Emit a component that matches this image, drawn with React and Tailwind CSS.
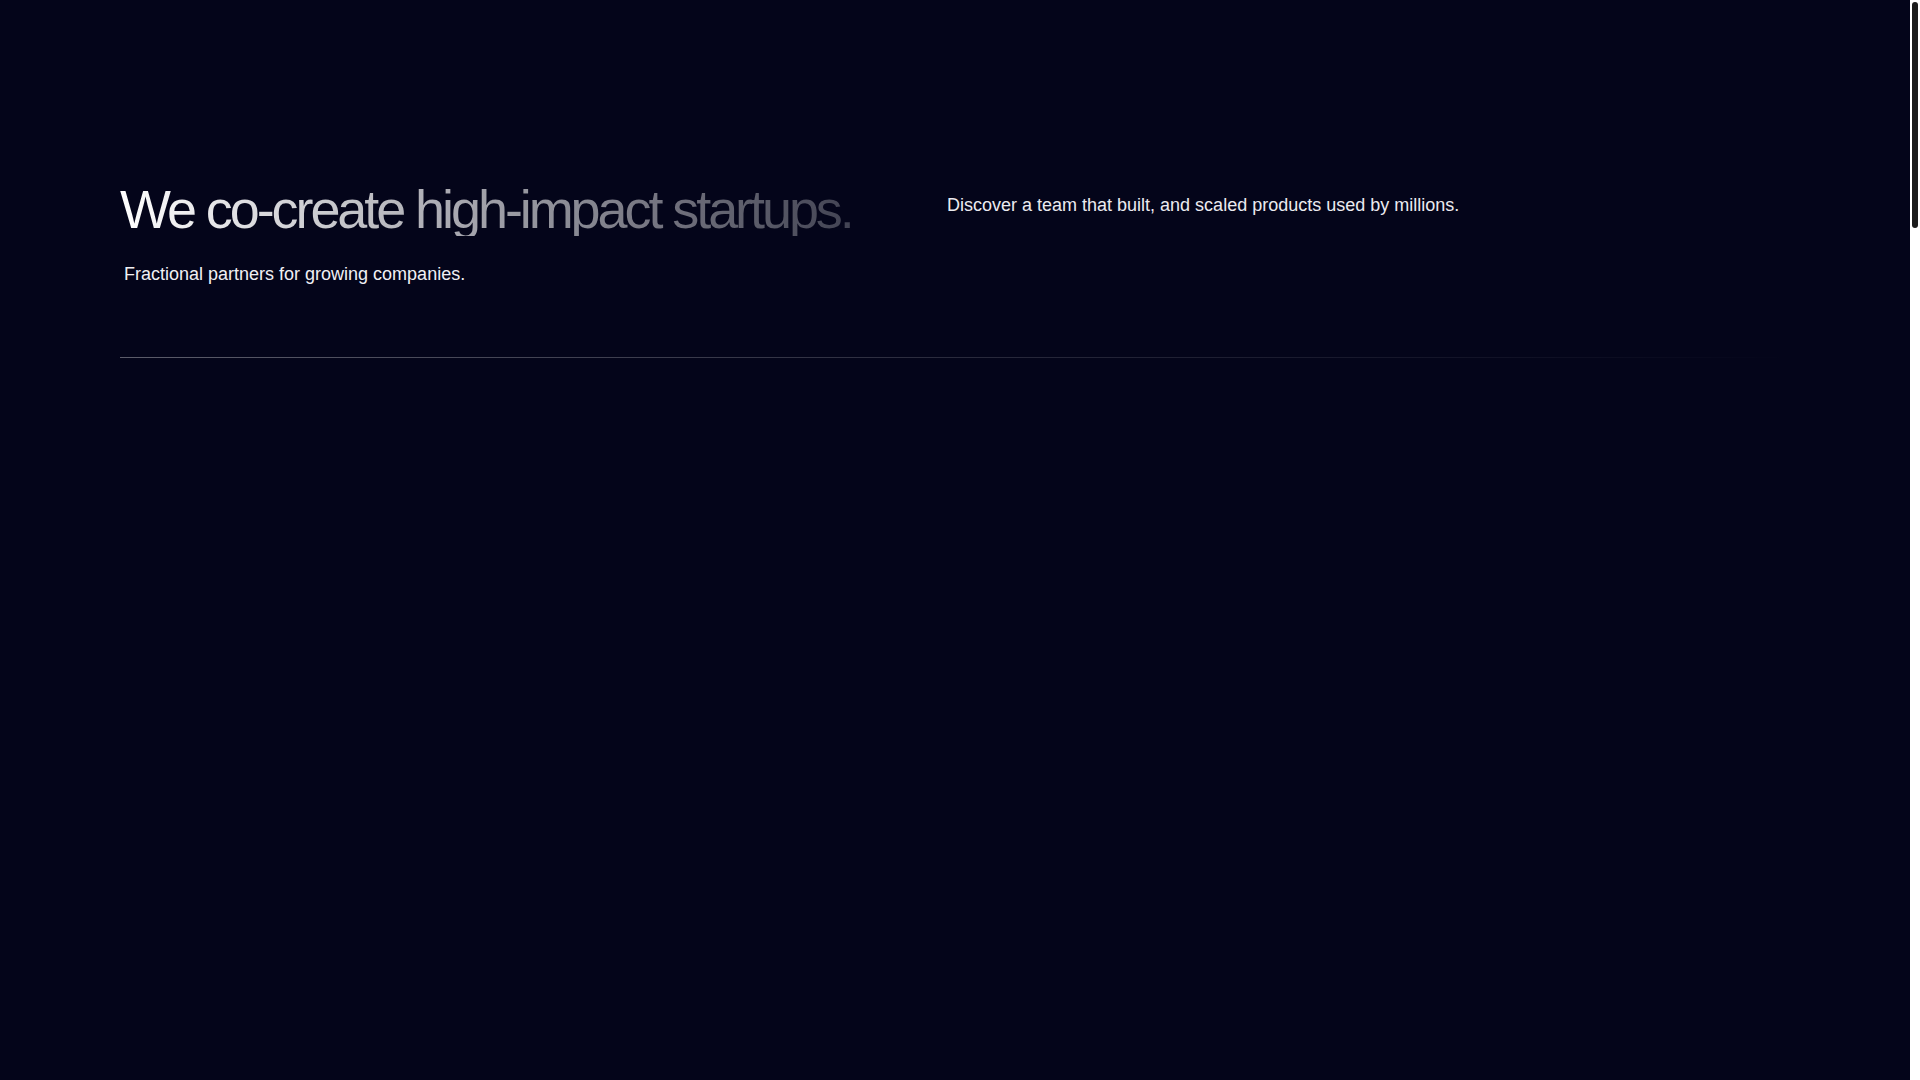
import React from 'react';

const ScrollRail = () => (
  <aside className="w-[10px] shrink-0 bg-white px-[2px] pt-[2px]">
    <div className="h-[226px] rounded-full bg-[#1b1b1b]" />
  </aside>
);

const App = () => {
  return (
    <div className="flex h-screen overflow-hidden bg-[#04051a] font-['Liberation_Sans',Arial,sans-serif]">
      <main className="flex-1">
        <section className="px-[120px] pt-[182px]">
          <div className="flex items-start">
            <div className="w-[827px] shrink-0">
              <h1 className="inline-block bg-gradient-to-r from-white to-white/25 bg-clip-text text-[54px] leading-none tracking-[-0.057em] text-transparent">
                We co-create high-impact startups.
              </h1>
              <p className="mt-[25px] pl-1 text-[18px] leading-[27px] text-[#f0f0f4]">
                Fractional partners for growing companies.
              </p>
            </div>
            <p className="mt-[10px] text-[18px] leading-[27px] text-[#ebebf0]">
              Discover a team that built, and scaled products used by millions.
            </p>
          </div>
          <div className="mt-[69px] h-px bg-gradient-to-r from-white/35 via-white/15 to-transparent" />
        </section>
      </main>
      <ScrollRail />
    </div>
  );
};

export default App;
